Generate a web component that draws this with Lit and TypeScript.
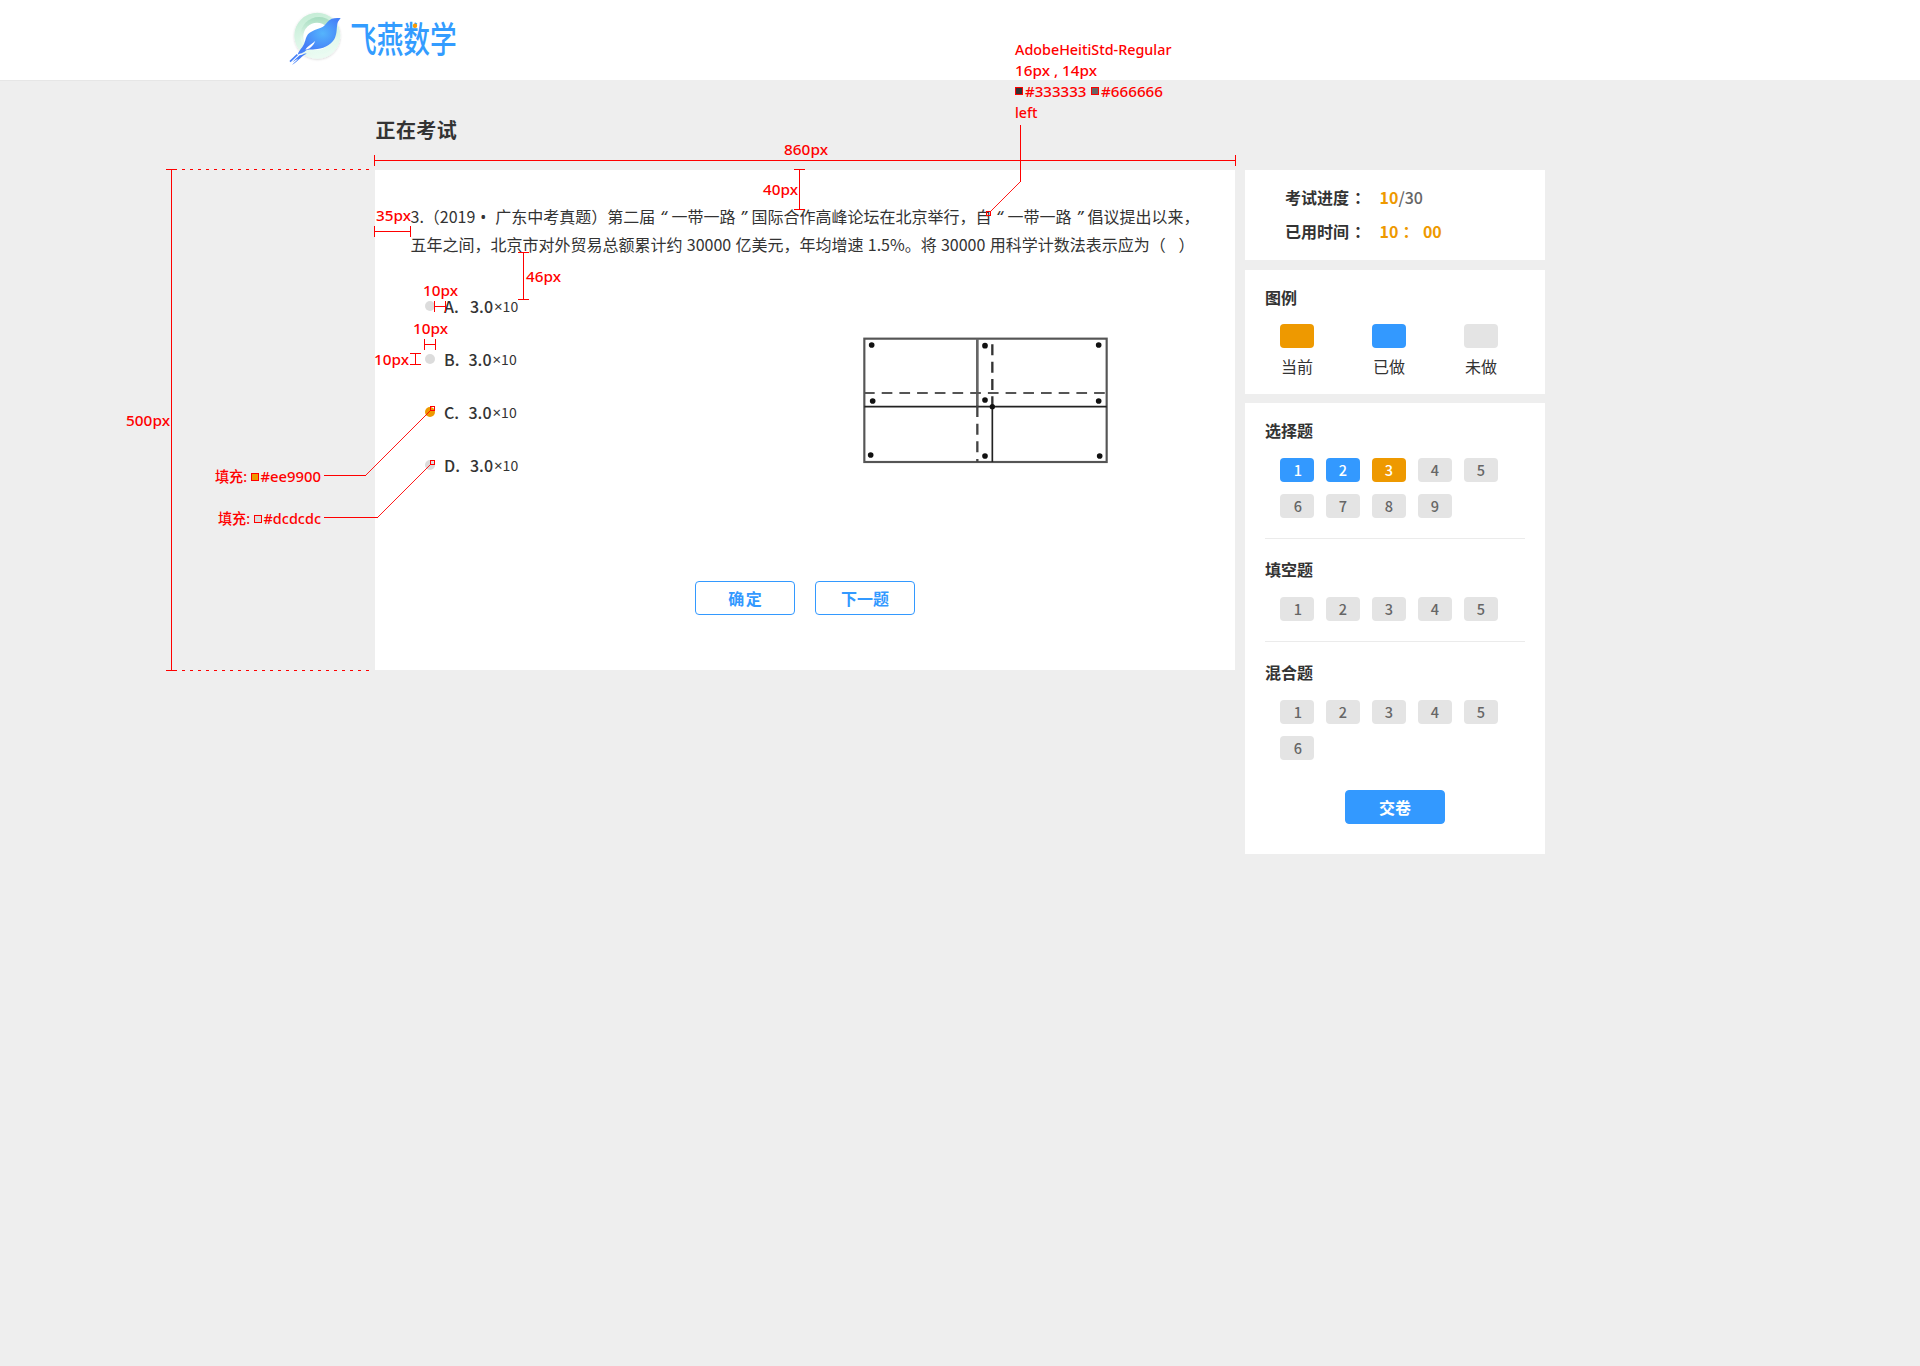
import { LitElement, html, svg, css } from "lit";
import { customElement, property } from "lit/decorators.js";

type State = "todo" | "done" | "current";

@customElement("brand-logo")
class BrandLogo extends LitElement {
  static styles = css`
    :host { display: block; width: 190px; height: 80px; }
    svg { display: block; }
    .name { font: 500 34px "Noto Sans CJK SC", sans-serif; fill: #339cff; }
  `;
  render() {
    return html`<svg width="190" height="80" viewBox="0 0 190 80">
      <defs>
        <linearGradient id="ring" x1="0" y1="0" x2="0.3" y2="1">
          <stop offset="0" stop-color="#c0ead2"></stop>
          <stop offset="0.55" stop-color="#d9f5e5"></stop>
          <stop offset="1" stop-color="#ebfbf2"></stop>
        </linearGradient>
        <linearGradient id="inner" x1="0" y1="0" x2="0" y2="1">
          <stop offset="0" stop-color="#a6dcbf"></stop>
          <stop offset="0.6" stop-color="#e6f9ee"></stop>
          <stop offset="1" stop-color="#e8fbf1"></stop>
        </linearGradient>
        <radialGradient id="bird" cx="0.58" cy="0.42" r="0.5">
          <stop offset="0" stop-color="#55b4fc"></stop>
          <stop offset="1" stop-color="#4580f8"></stop>
        </radialGradient>
        <filter id="shade" x="-20%" y="-20%" width="140%" height="140%">
          <feDropShadow dx="0" dy="2" stdDeviation="2.5" flood-color="#000" flood-opacity="0.18"></feDropShadow>
        </filter>
      </defs>
      <g transform="scale(0.33333)">
        <circle cx="112" cy="107" r="69" fill="url(#ring)" filter="url(#shade)"></circle>
        <circle cx="117" cy="107" r="56" fill="url(#inner)"></circle>
        <circle cx="111" cy="109" r="41" fill="#fff"></circle>
        <path fill="url(#bird)" d="M182 54C168 54 157 54 149 60C140 67 137 75 129 80C113 88 94 91 84 103C75 115 77 128 67 141C60 150 55 156 53 164C61 158 68 161 77 152C83 147 92 150 112 147C136 144 160 130 166 110C172 94 169 77 174 65Z"></path>
        <path fill="#fff" d="M106 122C96 133 84 136 76 149L82 148C92 144 101 136 106 122Z"></path>
        <path fill="none" stroke="#4580f8" stroke-width="5" d="M52 164L30 185"></path>
        <path fill="#4580f8" d="M59 166C68 166 72 158 80 161C66 166 58 180 36 195C44 186 50 182 54 176C48 179 44 182 38 186C46 178 52 172 59 166Z"></path>
      </g>
      <text class="name" transform="translate(70 52.6) scale(0.785 1.06)">飞燕数学</text>
      <circle cx="135" cy="25.8" r="2.2" fill="#f90"></circle>
    </svg>`;
  }
}

@customElement("card-figure")
class CardFigure extends LitElement {
  static styles = css`
    :host { display: block; width: 270px; height: 160px; }
    svg { display: block; }
  `;
  render() {
    const dots = [[65, 75], [405, 77], [746, 75], [68, 243], [405, 240], [746, 243], [62, 405], [405, 408], [749, 408]];
    return html`<svg width="270" height="160" viewBox="0 0 810 480" fill="none" stroke="#333">
      <rect x="43" y="56" width="727" height="370" stroke="#555" stroke-width="6.5"></rect>
      <path stroke="#666" stroke-width="8" d="M382 56V262"></path>
      <path stroke="#222" stroke-width="5" d="M43 260H770M427 260V426"></path>
      <path stroke="#555" stroke-width="6.5" stroke-dasharray="32 21.1" d="M42 219H770"></path>
      <path stroke="#444" stroke-width="7" stroke-dasharray="33 20" d="M382 258V426"></path>
      <path stroke="#333" stroke-width="7" stroke-dasharray="33 19" d="M427 73V260"></path>
      ${dots.map(([x, y]) => svg`<circle cx=${x} cy=${y} r="8.5" fill="#111" stroke="none"></circle>`)}
      <circle cx="427" cy="260" r="8" fill="#111" stroke="none"></circle>
    </svg>`;
  }
}

@customElement("question-group")
class QuestionGroup extends LitElement {
  @property() heading = "";
  @property({ attribute: false }) states: State[] = [];
  static styles = css`
    :host { display: block; }
    .heading { font-size: 16px; font-weight: 700; line-height: 24px; color: #333; }
    .grid { display: grid; grid-template-columns: repeat(5, 34px); gap: 12px; padding: 16px 0 0 15px; }
    .chip { height: 24px; line-height: 23px; border-radius: 4px; text-align: center; font-size: 14.5px;
      background: #e4e4e4; color: #666; box-sizing: border-box; font-weight: 500; }
    .chip:nth-child(5n + 1) { padding-left: 2px; }
    .done { background: #39f; color: #fff; font-weight: 500; }
    .current { background: #e90; color: #fff; font-weight: 500; }
  `;
  render() {
    return html`<div class="heading">${this.heading}</div>
      <div class="grid">${this.states.map((s, i) => html`<div class="chip ${s}">${i + 1}</div>`)}</div>`;
  }
}

@customElement("spec-notes")
class SpecNotes extends LitElement {
  static styles = css`
    :host { display: block; pointer-events: none; }
    svg { display: block; }
    text { font: 500 15px "Noto Sans", "Noto Sans CJK SC", sans-serif; fill: #f00; white-space: pre; }
    .line { stroke: #f00; fill: none; shape-rendering: crispEdges; }
    .box { stroke: #f00; stroke-width: 1; }
    .slant { stroke: #f00; fill: none; stroke-width: 0.9; }
  `;
  private hSpan(x1: number, x2: number, y: number) {
    return svg`<path class="line" d="M${x1} ${y}H${x2}M${x1} ${y - 5.5}v11M${x2} ${y - 5.5}v11"></path>`;
  }
  private vSpan(x: number, y1: number, y2: number) {
    return svg`<path class="line" d="M${x} ${y1}V${y2}M${x - 5.5} ${y1}h11M${x - 5.5} ${y2}h11"></path>`;
  }
  private label(x: number, y: number, w: number, t: string) {
    return svg`<text x=${x} y=${y} textLength=${w} lengthAdjust="spacingAndGlyphs">${t}</text>`;
  }
  private swatch(x: number, y: number, c: string, s = 7) {
    return svg`<rect class="box" x=${x} y=${y} width=${s} height=${s} fill=${c}></rect>`;
  }
  render() {
    return html`<svg width="1920" height="1366" viewBox="0 0 1920 1366">
      ${this.hSpan(374.5, 1235.5, 160.5)} ${this.hSpan(374.5, 410.5, 231.5)}
      ${this.hSpan(434.5, 445.5, 306.5)} ${this.hSpan(424.5, 435.5, 344.5)}
      ${this.vSpan(171.5, 169.5, 670.5)} ${this.vSpan(799.5, 169.5, 209.5)}
      ${this.vSpan(523.5, 252.5, 299.5)} ${this.vSpan(415.5, 353.5, 364.5)}
      <path class="line" stroke-dasharray="3 5" d="M182 169.5H370M182 670.5H370"></path>
      <path class="line" d="M1020.5 125V182M324 475.5H366M324 517.5H378"></path>
      <path class="slant" d="M1020.5 181.5L990 212M365.5 475.5L431 410M377.5 517.5L431 464"></path>
      ${this.swatch(986.5, 211.5, "none", 4)} ${this.swatch(430.5, 406.5, "none", 4)} ${this.swatch(430.5, 460.5, "none", 4)}
      ${this.swatch(251.5, 473.5, "#ee9900")} ${this.swatch(254.5, 515.5, "#dcdcdc")}
      ${this.swatch(1015.5, 87.5, "#333333")} ${this.swatch(1091.5, 87.5, "#666666")}
      ${this.label(1015, 55, 156.5, "AdobeHeitiStd-Regular")}
      ${this.label(1015, 76, 82, "16px , 14px")}
      ${this.label(1025, 97, 61.5, "#333333")} ${this.label(1101, 97, 62, "#666666")}
      ${this.label(1015, 118, 22.5, "left")}
      ${this.label(784, 155, 44, "860px")} ${this.label(763, 195, 35, "40px")}
      ${this.label(376, 221, 35, "35px")} ${this.label(526, 282, 35, "46px")}
      ${this.label(423, 296, 35, "10px")} ${this.label(413, 334, 35, "10px")}
      ${this.label(374, 365, 35, "10px")} ${this.label(126, 426, 44, "500px")}
      ${this.label(215, 482, 32, "填充:")} ${this.label(260.5, 482, 60.5, "#ee9900")}
      ${this.label(218, 524, 32, "填充:")} ${this.label(263.5, 524, 57.5, "#dcdcdc")}
    </svg>`;
  }
}

@customElement("app-root")
class AppRoot extends LitElement {
  static styles = css`
    :host { display: block; position: relative; width: 1920px; height: 1366px; background: #eee; color: #333;
      overflow: hidden; font-family: "Noto Sans CJK SC", sans-serif; font-size: 16px; }
    .header { height: 80px; background: #fff; padding-left: 280px; }
    .edge { width: 400px; height: 1px; background: #e6e6e6; }
    .page { width: 1170px; margin-left: 375px; }
    .title { height: 89px; box-sizing: border-box; padding-top: 34px; font-size: 20px; line-height: 30px;
      font-weight: 700; letter-spacing: 0.4px; text-indent: 0.5px; }
    .columns { display: flex; gap: 10px; align-items: flex-start; }
    .exam { width: 860px; height: 500px; box-sizing: border-box; background: #fff; padding: 32px 0 0 35.5px;
      display: flex; flex-direction: column; }
    .stem { line-height: 28px; height: 28px; white-space: pre; }
    .airy { word-spacing: 0.7px; }
    .dot-sep { display: inline-block; width: 20px; padding-left: 5px; box-sizing: border-box; font-family: "Noto Sans", sans-serif; line-height: 20px; }
    .quote { display: inline-block; width: 16px; text-align: center; font: italic 17px/20px "Noto Sans", sans-serif; }
    .body { display: flex; padding: 36px 0 0 14.5px; height: 230px; box-sizing: border-box; }
    .options { width: 425px; display: flex; flex-direction: column; gap: 29px; }
    .option { display: flex; align-items: center; height: 24px; line-height: 22px; white-space: pre; }
    .radio { width: 10px; height: 10px; border-radius: 50%; background: #dcdcdc; margin-right: 9px; }
    .radio.on { background: #e90; }
    .letter { width: 24.5px; font-weight: 500; }
    .num { font-weight: 500; }
    .wide { width: 26px; }
    .small { font-size: 14px; margin-left: 1px; }
    .times { font-family: "Noto Sans", sans-serif; font-size: 15px; }
    .figure { padding-top: 26px; }
    .actions { display: flex; gap: 20px; padding: 93px 0 0 284.5px; }
    .btn { width: 100px; height: 34px; line-height: 32px; box-sizing: border-box; border: 1px solid #39f;
      border-radius: 4px; text-align: center; color: #39f; font-weight: 700; background: #fff; }
    .spaced { letter-spacing: 1.5px; padding-left: 1.5px; }
    .btn.fill { background: #39f; color: #fff; margin: 30px auto 0; }
    .side { width: 300px; display: flex; flex-direction: column; }
    .card { background: #fff; box-sizing: border-box; padding: 0 20px; }
    .progress { height: 90px; padding: 11px 0 0 40px; margin-bottom: 10px; }
    .stat { display: flex; height: 34px; line-height: 33px; white-space: pre; }
    .key { font-weight: 700; }
    .colon { font-family: "Noto Sans CJK JP", sans-serif; font-weight: 700; }
    .key-colon { width: 30.5px; padding-left: 1px; box-sizing: border-box; }
    .hot { color: #e90; font-weight: 700; }
    .gap { width: 24.5px; }
    .total { color: #666; font-weight: 500; }
    .legend { height: 124px; padding-top: 15px; margin-bottom: 9px; }
    .heading { font-weight: 700; line-height: 24px; }
    .keys { display: flex; gap: 58px; padding: 15px 0 0 15px; }
    .item { width: 34px; display: flex; flex-direction: column; align-items: center; line-height: 23px; }
    .swatch { width: 34px; height: 24px; border-radius: 4px; background: #e4e4e4; margin-bottom: 7px; }
    .current { background: #e90; }
    .done { background: #39f; }
    .groups { height: 451px; padding-top: 15px; }
    .rule { height: 1px; background: #ebebeb; margin: 20px 0 18px; }
    .notes { position: absolute; left: 0; top: 0; }
  `;
  render() {
    const todo = (n: number): State[] => Array(n).fill("todo");
    const options = ["A", "B", "C", "D"];
    const q = (c: string) => html`<span class="quote">${c}</span>`;
    return html`
      <div class="header"><brand-logo></brand-logo></div>
      <div class="edge"></div>
      <div class="page">
        <div class="title">正在考试</div>
        <div class="columns">
          <div class="exam">
            <div class="stem">3.（2019<span class="dot-sep">•</span>广东中考真题）第二届${q("“")}一带一路${q("”")}国际合作高峰论坛在北京举行，自${q("“")}一带一路${q("”")}倡议提出以来，</div>
            <div class="stem airy">五年之间，北京市对外贸易总额累计约 30000 亿美元，年均增速 1.5%。将 30000 用科学计数法表示应为（   ）</div>
            <div class="body">
              <div class="options">
                ${options.map((o) => html`<div class="option">
                  <span class="radio ${o === "C" ? "on" : ""}"></span><span class="letter ${o === "A" || o === "D" ? "wide" : ""}">${o}.</span><span class="num">3.0</span><span class="small"><span class="times">×</span>10</span>
                </div>`)}
              </div>
              <div class="figure"><card-figure></card-figure></div>
            </div>
            <div class="actions">
              <div class="btn spaced">确定</div>
              <div class="btn">下一题</div>
            </div>
          </div>
          <div class="side">
            <div class="card progress">
              <div class="stat"><span class="key">考试进度</span><span class="colon key-colon">：</span><span class="hot">10</span><span class="total">/30</span></div>
              <div class="stat"><span class="key">已用时间</span><span class="colon key-colon">：</span><span class="hot">10</span><span class="colon hot gap">：</span><span class="hot">00</span></div>
            </div>
            <div class="card legend">
              <div class="heading">图例</div>
              <div class="keys">
                <div class="item"><span class="swatch current"></span>当前</div>
                <div class="item"><span class="swatch done"></span>已做</div>
                <div class="item"><span class="swatch"></span>未做</div>
              </div>
            </div>
            <div class="card groups">
              <question-group heading="选择题" .states=${["done", "done", "current", ...todo(6)] as State[]}></question-group>
              <div class="rule"></div>
              <question-group heading="填空题" .states=${todo(5)}></question-group>
              <div class="rule"></div>
              <question-group heading="混合题" .states=${todo(6)}></question-group>
              <div class="btn fill">交卷</div>
            </div>
          </div>
        </div>
      </div>
      <spec-notes class="notes"></spec-notes>
    `;
  }
}
